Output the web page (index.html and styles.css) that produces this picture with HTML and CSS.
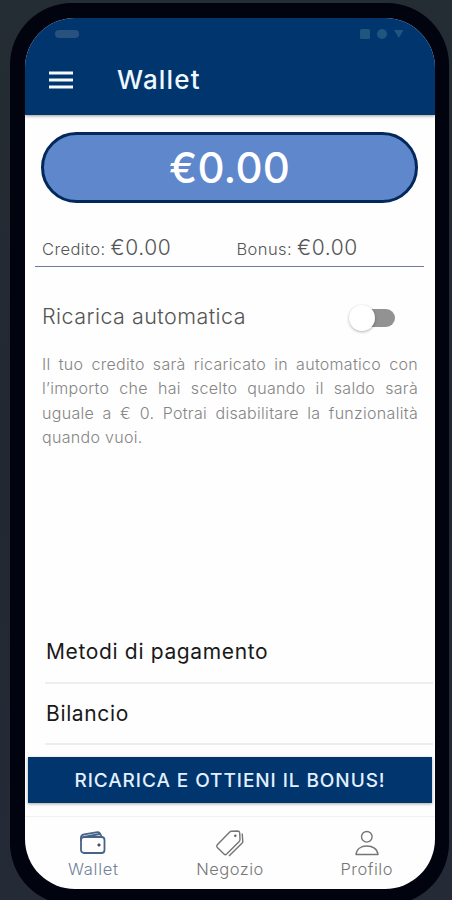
FILE: index.html
```html
<!DOCTYPE html>
<html lang="it">
<head>
<meta charset="utf-8">
<title>Wallet</title>
<link rel="stylesheet" href="styles.css">
</head>
<body>
<div class="phone">
  <div class="screen">
    <header class="header">
      <div class="status">
        <span class="pill"></span>
        <svg class="signals" width="46" height="12" viewBox="0 0 46 12"><rect x="0" y="1" width="10" height="10" rx="1.5"/><circle cx="22" cy="6" r="5"/><path d="M34 2h9.500l-4.700 8z"/></svg>
      </div>
      <div class="bar">
        <svg class="menu" width="24" height="18" viewBox="0 0 24 18"><path d="M0 2h24M0 9h24M0 16h24"/></svg>
        <h1 class="title">Wallet</h1>
      </div>
    </header>
    <main class="content">
      <div class="balance"><span>€0.00</span></div>
      <div class="split">
        <div class="part"><span class="label credit">Credito:</span><span class="amount">€0.00</span></div>
        <div class="part"><span class="label bonus">Bonus:</span><span class="amount">€0.00</span></div>
      </div>
      <div class="auto"><h2 class="auto-title">Ricarica automatica</h2><span class="switch"><span class="knob"></span></span></div>
      <p class="info">Il tuo credito sarà ricaricato in automatico con l’importo che hai scelto quando il saldo sarà uguale a € 0. Potrai disabilitare la funzionalità quando vuoi.</p>
    </main>
    <div class="list">
      <div class="row"><span class="pay">Metodi di pagamento</span></div>
      <div class="row"><span class="bilancio">Bilancio</span></div>
    </div>
    <div class="cta"><span>RICARICA E OTTIENI IL BONUS!</span></div>
    <nav class="nav">
      <div class="tab active">
        <svg width="28" height="28" viewBox="0 0 28 28"><rect x="2" y="7" width="23.500" height="16" rx="3"/><path d="M2 11V7.500Q2 5 5 4.300L18.500 2.200Q21 2 22.500 6.800M4.500 7L21 4"/><circle class="dot" cx="20" cy="15" r="1.300"/></svg>
        <span class="t-wallet">Wallet</span>
      </div>
      <div class="tab">
        <svg width="30" height="28" viewBox="0 0 30 28"><path d="M14.500 2.200Q15.300 1.400 16.500 1.300L22.500 1Q24.500 1 24.700 3L25 9.500Q25 10.700 24.200 11.500L11.700 24Q10.300 25.300 9 24L2.300 17.500Q1 16.200 2.300 14.800ZM27.200 3.500L27.800 11.500Q27.800 12.300 27.200 13L14 26"/><circle class="dot" cx="20.300" cy="5.800" r="1"/></svg>
        <span class="t-shop">Negozio</span>
      </div>
      <div class="tab">
        <svg width="26" height="28" viewBox="0 0 26 28"><circle cx="12.800" cy="6.800" r="5.300"/><path d="M2 24.500C2.500 19 7 16 12.800 16S23.500 19 24 24.500Z"/></svg>
        <span class="t-profile">Profilo</span>
      </div>
    </nav>
  </div>
</div>
</body>
</html>
```
FILE: styles.css
```css
* { box-sizing: border-box; }
body {
  margin: 0;
  height: 900px;
  overflow: hidden;
  padding: 3px 3px 0 10px;
  background: linear-gradient(180deg, #252d34, #222832 50%, #252b36);
  font-family: Inter, "Liberation Sans", sans-serif;
  color: #555;
  white-space: nowrap;
}
h1, h2, p { margin: 0; font-weight: 400; }
svg { display: block; fill: none; flex: none; }
.phone {
  height: 902px;
  padding: 15px 14px 16px 15px;
  border-radius: 62px;
  background: #01030f;
}
.screen {
  height: 871px;
  display: flex;
  flex-direction: column;
  overflow: hidden;
  border-radius: 50px;
  background: #fefefe;
}
.header {
  height: 97px;
  flex: none;
  background: #01356e;
  box-shadow: 0 1px 3px rgba(0, 0, 0, .4);
}
.status {
  height: 31px;
  padding: 10px 29px 0 30px;
  display: flex;
  justify-content: space-between;
}
.pill { width: 24px; height: 8px; margin-top: 2px; border-radius: 4px; background: #28517e; }
.signals { fill: #205580; }
.bar { height: 61px; padding-left: 24px; display: flex; align-items: center; }
.menu { stroke: #f4faff; stroke-width: 2.8; }
.title { margin: -1px 0 0 44px; font-size: 26px; letter-spacing: 1.2px; color: #edf8ff; font-weight: 500; }
.content { height: 503px; flex: none; padding: 17px 11px 0 10px; }
.balance {
  height: 71px;
  margin: 0 6px;
  display: flex;
  align-items: center;
  justify-content: center;
  border: 3px solid #02285c;
  border-radius: 36px;
  background: #5f87cc;
  color: #fff;
  font-size: 42px;
  font-weight: 500;
  letter-spacing: .2px;
}
.split {
  height: 64px;
  display: flex;
  padding: 32px 7px 0;
  border-bottom: 1px solid #6e7c9f;
}
.part { flex: none; width: 194.5px; display: flex; align-items: baseline; gap: 5px; }
.part + .part { width: 180px; }
.label { font-size: 16.5px; font-weight: 300; letter-spacing: .4px; }
.amount { font-size: 21px; font-weight: 300; letter-spacing: .6px; }
.auto {
  height: 48px;
  margin-top: 25px;
  padding: 0 29px 0 7px;
  display: flex;
  align-items: center;
  justify-content: space-between;
}
.auto-title { font-size: 21.5px; font-weight: 300; letter-spacing: .46px; }
.switch { width: 38px; height: 18px; margin-top: 4px; border-radius: 9px; background: #929292; }
.knob {
  display: block;
  width: 26px;
  height: 26px;
  margin: -4px 0 0 -8px;
  border-radius: 50%;
  background: #fff;
  box-shadow: 0 1px 3px rgba(0, 0, 0, .3);
}
.info {
  margin: 12px 6px 0 7px;
  font-size: 16px;
  font-weight: 300;
  letter-spacing: .3px;
  line-height: 24.3px;
  text-align: justify;
  white-space: normal;
  color: #858585;
}
.list {
  flex: none;
  height: 127px;
  padding: 4px 2px 0 20px;
  color: #191919;
  font-size: 21px;
  letter-spacing: .65px;
}
.row { height: 61.5px; display: flex; align-items: center; border-bottom: 2px solid #eee; }
.pay, .bilancio { padding-left: 1px; }
.cta {
  height: 46px;
  flex: none;
  margin: 12px 3px 0;
  display: flex;
  align-items: center;
  justify-content: center;
  background: #01356e;
  color: #e2f0ff;
  font-size: 19px;
  font-weight: 500;
  letter-spacing: .93px;
  box-shadow: 0 1px 3px rgba(0, 0, 0, .35);
}
.nav {
  flex: 1;
  margin-top: 13px;
  display: flex;
  border-top: 1px solid #f1f1f1;
}
.tab {
  flex: 1;
  padding-top: 13px;
  display: flex;
  flex-direction: column;
  align-items: center;
  gap: 1px;
  font-size: 16.5px;
  font-weight: 300;
  letter-spacing: .5px;
  color: #777;
}
.tab svg { height: 28px; stroke: #757575; stroke-width: 1.4; stroke-linejoin: round; }
.tab .dot { fill: #444; stroke-width: .6; }
.tab.active { color: #71819a; letter-spacing: .75px; }
.tab.active svg { stroke: #476386; stroke-width: 1.8; }
```
